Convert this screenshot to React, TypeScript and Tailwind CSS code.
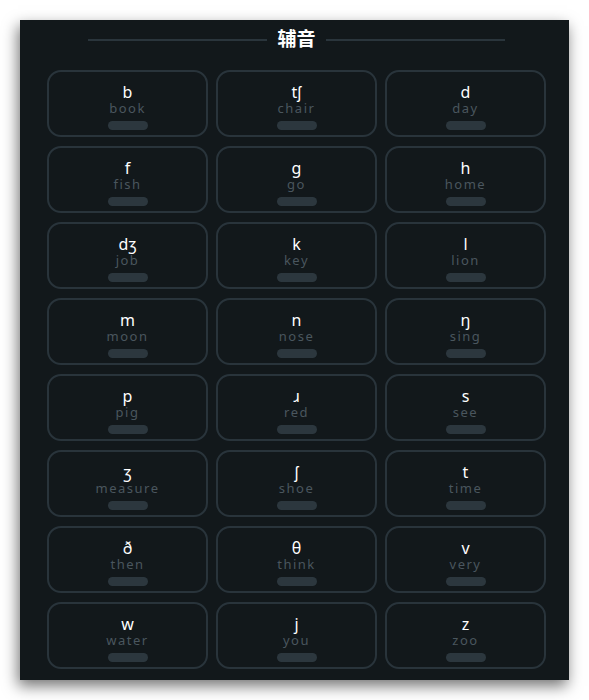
const consonants: [string, string][] = [
  ['b', 'book'],
  ['tʃ', 'chair'],
  ['d', 'day'],
  ['f', 'fish'],
  ['g', 'go'],
  ['h', 'home'],
  ['dʒ', 'job'],
  ['k', 'key'],
  ['l', 'lion'],
  ['m', 'moon'],
  ['n', 'nose'],
  ['ŋ', 'sing'],
  ['p', 'pig'],
  ['ɹ', 'red'],
  ['s', 'see'],
  ['ʒ', 'measure'],
  ['ʃ', 'shoe'],
  ['t', 'time'],
  ['ð', 'then'],
  ['θ', 'think'],
  ['v', 'very'],
  ['w', 'water'],
  ['j', 'you'],
  ['z', 'zoo'],
]

function SoundCard({ ipa, word }: { ipa: string; word: string }) {
  return (
    <div className="h-[67px] rounded-[14px] border-2 border-[#29343b] flex flex-col items-center pt-[11px]">
      <div className="text-[16px] leading-[18px] text-white">{ipa}</div>
      <div className="text-[13px] leading-[15px] tracking-[1.5px] text-[#4a565e]">{word}</div>
      <div className="mt-[5px] h-[9px] w-[40px] rounded-full bg-[#2c373e]" />
    </div>
  )
}

export default function App() {
  return (
    <div className="min-h-[700px] bg-white pt-[20px] pl-[20px]">
      <div
        className="w-[549px] h-[660px] bg-[#12181b] shadow-[-2px_6px_14px_rgba(0,0,0,0.55)] pl-[27px] pr-[23px]"
        style={{ fontFamily: '"Noto Sans", "Noto Sans CJK SC", sans-serif' }}
      >
        <div className="flex items-center justify-center gap-[10px] h-[38px] pt-[1px]">
          <div className="w-[179px] h-[2px] bg-[#2a353c]" />
          <div className="text-[19px] font-bold text-white leading-none">辅音</div>
          <div className="w-[179px] h-[2px] bg-[#2a353c]" />
        </div>
        <div className="mt-[12px] grid grid-cols-3 gap-x-[8px] gap-y-[9px]">
          {consonants.map(([ipa, word]) => (
            <SoundCard key={ipa} ipa={ipa} word={word} />
          ))}
        </div>
      </div>
    </div>
  )
}
